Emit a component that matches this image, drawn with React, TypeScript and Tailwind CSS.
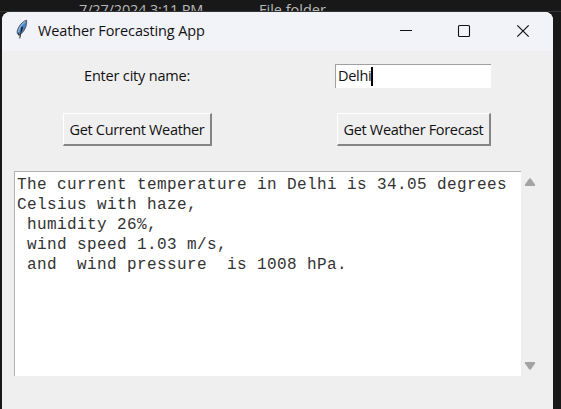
import React from "react";

const ui = "font-['Open_Sans','Noto_Sans',sans-serif]";

const report = `The current temperature in Delhi is 34.05 degrees
Celsius with haze,
 humidity 26%,
 wind speed 1.03 m/s,
 and  wind pressure  is 1008 hPa.`;

function Feather() {
  return (
    <svg width="12" height="21" viewBox="0 0 12 21" className="mt-[7px] ml-[14px] shrink-0">
      <path d="M10.6 1.2C7.2 1.8 2 7.2 1.2 12.4c-.2 1.7.4 2.9 1.6 3.6l1.2-.5C8.3 12.8 11.2 6.6 10.6 1.2Z" fill="#4c86c8" stroke="#4a4f58" strokeWidth=".9" />
      <path d="M9.2 2.8C6.2 4.8 3 9.2 2.5 13" stroke="#8fb6dc" strokeWidth="1.2" fill="none" />
      <path d="M6.4 7.8 5.2 12.4" stroke="#15181f" strokeWidth="1.5" fill="none" />
      <path d="M5.2 12 3.7 19.3" stroke="#333" strokeWidth="1.1" fill="none" />
      <path d="m2 14 1.4 2.6" stroke="#333" strokeWidth="1.1" />
    </svg>
  );
}

function TitleBar() {
  return (
    <header className="flex h-[39px] bg-[#f1f3f9]">
      <Feather />
      <h1 className="ml-[10px] w-[170px] whitespace-nowrap pt-[8px] text-[14.5px] leading-[22px] tracking-[-0.14px] text-[#111]">Weather Forecasting App</h1>
      <svg className="ml-auto mr-[23px] mt-[12px]" width="131" height="14" viewBox="0 0 131 14" fill="none" stroke="#111">
        <path d="M1 6.5h12" strokeWidth="1" />
        <rect x="59.5" y="1.5" width="11" height="11" rx="1" strokeWidth="1.1" />
        <path d="m118.3 1.3 11.4 11.4m0-11.4-11.4 11.4" strokeWidth="1.2" />
      </svg>
    </header>
  );
}

function TkButton({ children, className }: { children: React.ReactNode; className: string }) {
  return (
    <button
      className={`flex h-[33px] items-center justify-center whitespace-nowrap border-t border-l border-r-2 border-b-2 border-t-white border-l-white border-r-[#858585] border-b-[#858585] pt-[2px] text-[14.5px] leading-[20px] ${className}`}
    >
      {children}
    </button>
  );
}

export default function App() {
  return (
    <div className={`flex h-[409px] w-[561px] flex-col overflow-hidden bg-[#181818] text-[#111] ${ui}`}>
      <div className="flex h-[12px] overflow-hidden border-b border-[#333] pl-[79px] pt-px text-[14.5px] leading-[18px] text-[#b8b8b8]">
        <span className="w-[180px] whitespace-nowrap tracking-[-0.15px]">7/27/2024 3:11 PM</span>
        <span className="whitespace-nowrap">File folder</span>
      </div>
      <main className="ml-[2px] h-[397px] w-[551px] overflow-hidden rounded-t-[8px] bg-[#efefef]">
        <TitleBar />
        <div className="flex h-[37px] pt-[13px]">
          <label className="ml-[82px] w-[108px] whitespace-nowrap text-[14.5px] leading-[24px] tracking-[-0.18px]">Enter city name:</label>
          <div className="ml-[143px] flex h-[24px] w-[156px] shrink-0 items-center border-t border-l border-[#a0a0a0] bg-white pl-[2px] text-[14.5px]">
            <span className="-mt-px w-[33px] whitespace-nowrap tracking-[-0.3px]">Delhi</span>
            <span className="-mt-px h-[19px] w-[2px] bg-black" />
          </div>
        </div>
        <div className="flex pt-[25px]">
          <TkButton className="ml-[61px] w-[149px] tracking-[-0.33px]">Get Current Weather</TkButton>
          <TkButton className="ml-[125px] w-[154px] tracking-[-0.33px]">Get Weather Forecast</TkButton>
        </div>
        <div className="ml-[12px] mt-[25px] flex h-[205px]">
          <pre className="w-[507px] overflow-hidden border-t-[1.5px] border-l-[1.5px] border-[#b0b0b0] bg-white pl-[2px] pt-[3px] font-['Liberation_Mono',monospace] text-[16px] leading-[20px] tracking-[0.4px] text-[#333]">{report}</pre>
          <div className="flex w-[18px] flex-col items-center justify-between pt-[7px] pb-[6px]">
            <svg width="12" height="9" viewBox="0 0 12 9" fill="#a3a3a3"><path d="M5 .7Q6-.1 7 .7L11 6.5Q11.5 8 10.3 8H1.7Q.5 8 1 6.5Z" /></svg>
            <svg width="12" height="9" viewBox="0 0 12 9" fill="#a3a3a3"><path d="M5 8.3Q6 9.1 7 8.3L11 2.5Q11.5 1 10.3 1H1.7Q.5 1 1 2.5Z" /></svg>
          </div>
        </div>
      </main>
    </div>
  );
}
